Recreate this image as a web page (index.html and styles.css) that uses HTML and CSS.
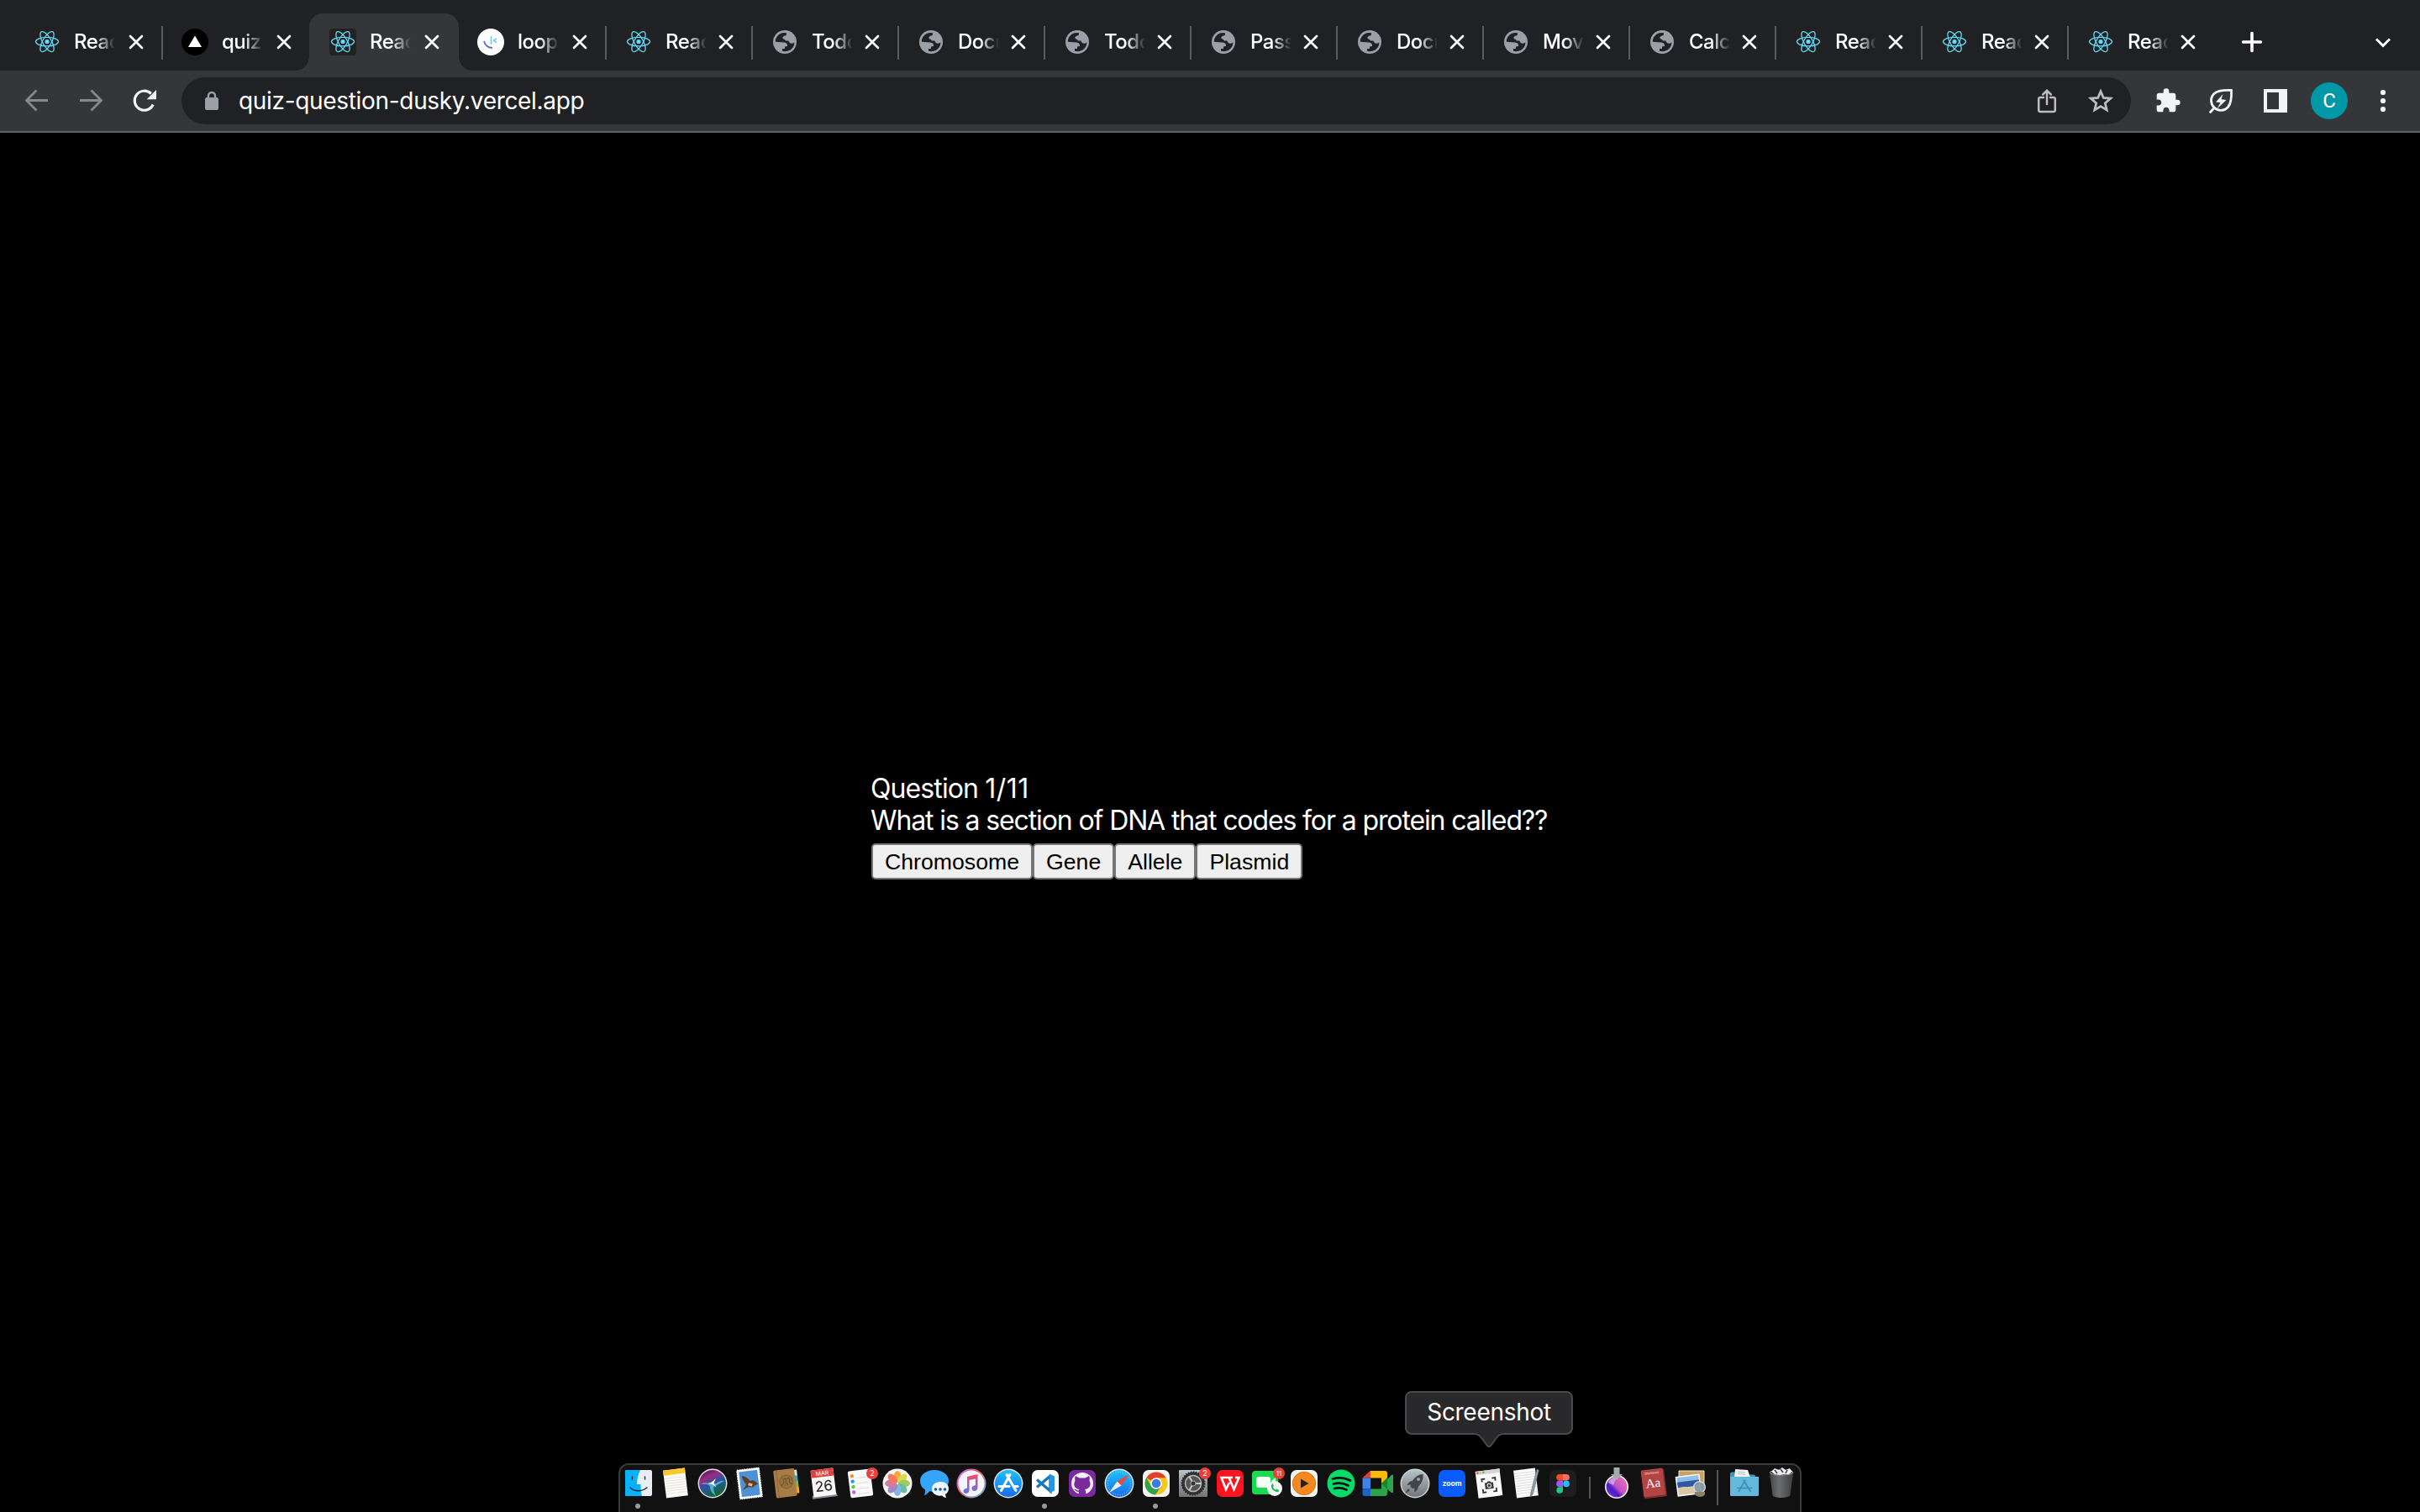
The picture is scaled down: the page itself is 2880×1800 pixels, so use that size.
FILE: index.html
```html
<!DOCTYPE html>
<html lang="en">
<head>
<meta charset="utf-8">
<title>Quiz</title>
<link rel="stylesheet" href="styles.css">
</head>
<body>
<svg class="defs" aria-hidden="true">
  <defs>
    <symbol id="react" viewBox="0 0 32 32">
      <rect width="32" height="32" rx="4" fill="#222"/>
      <g fill="none" stroke="#61dafb" stroke-width="1.3">
        <ellipse cx="16" cy="15.6" rx="13.5" ry="5.2"/>
        <ellipse cx="16" cy="15.6" rx="13.5" ry="5.2" transform="rotate(60 16 15.6)"/>
        <ellipse cx="16" cy="15.6" rx="13.5" ry="5.2" transform="rotate(120 16 15.6)"/>
      </g>
      <circle cx="16" cy="15.6" r="2.6" fill="#61dafb"/>
    </symbol>
    <symbol id="globe" viewBox="0 0 32 32">
      <circle cx="16" cy="16" r="14" fill="#9aa0a6"/>
      <path fill="#202124" d="M4.800 15.800C4.800 10 9 5.200 15 4.900l3 .4V7c-.6 2-4.800 1.600-4.600 4 .2 2 3.200 1.300 3.300 3.600h3.700c.6 3.400 4 4 7 1.900 0 6-5 10.800-11.300 10.700L13 26.800V24h3v-2.600l3-.4c.3-2.700-1-4.200-4-4.500z"/>
    </symbol>
    <symbol id="close" viewBox="0 0 20 20">
      <path d="M3 3l14 14M17 3L3 17" stroke="#fff" stroke-width="2.700" stroke-linecap="round"/>
    </symbol>
  </defs>
</svg>

<div class="tabs">
  <div class="tab wide"><svg class="fav"><use href="#react"/></svg><span class="name">Reac</span><svg class="x"><use href="#close"/></svg></div>
  <div class="tab wide sep"><svg class="fav" viewBox="0 0 32 32"><circle cx="16" cy="16" r="16" fill="#000"/><path d="M16 8.500L24 22H8z" fill="#fff"/></svg><span class="name">quiz-</span><svg class="x"><use href="#close"/></svg></div>
  <div class="tab wide active"><svg class="fav"><use href="#react"/></svg><span class="name">Reac</span><svg class="x"><use href="#close"/></svg></div>
  <div class="tab wide"><svg class="fav" viewBox="0 0 32 32"><circle cx="16" cy="16" r="16" fill="#fff"/><path d="M8 15c1 4.500 5 8 10 8" fill="none" stroke="#5f6fc4" stroke-width="1.800"/><path d="M16.500 9v10M23 12l-3.500 2.200L23 16.500" fill="none" stroke="#7cc4dc" stroke-width="1.500"/></svg><span class="name">loop</span><svg class="x"><use href="#close"/></svg></div>
  <div class="tab sep"><svg class="fav"><use href="#react"/></svg><span class="name">Reac</span><svg class="x"><use href="#close"/></svg></div>
  <div class="tab sep"><svg class="fav"><use href="#globe"/></svg><span class="name">Todo</span><svg class="x"><use href="#close"/></svg></div>
  <div class="tab sep"><svg class="fav"><use href="#globe"/></svg><span class="name">Docu</span><svg class="x"><use href="#close"/></svg></div>
  <div class="tab sep"><svg class="fav"><use href="#globe"/></svg><span class="name">Todo</span><svg class="x"><use href="#close"/></svg></div>
  <div class="tab sep"><svg class="fav"><use href="#globe"/></svg><span class="name">Pass</span><svg class="x"><use href="#close"/></svg></div>
  <div class="tab sep"><svg class="fav"><use href="#globe"/></svg><span class="name">Docu</span><svg class="x"><use href="#close"/></svg></div>
  <div class="tab sep"><svg class="fav"><use href="#globe"/></svg><span class="name">Mov</span><svg class="x"><use href="#close"/></svg></div>
  <div class="tab sep"><svg class="fav"><use href="#globe"/></svg><span class="name">Calc</span><svg class="x"><use href="#close"/></svg></div>
  <div class="tab sep"><svg class="fav"><use href="#react"/></svg><span class="name">Reac</span><svg class="x"><use href="#close"/></svg></div>
  <div class="tab sep"><svg class="fav"><use href="#react"/></svg><span class="name">Reac</span><svg class="x"><use href="#close"/></svg></div>
  <div class="tab sep"><svg class="fav"><use href="#react"/></svg><span class="name">Reac</span><svg class="x"><use href="#close"/></svg></div>
  <div class="newtab"><svg width="28" height="28" viewBox="0 0 28 28"><path d="M14 3.500v21M3.500 14h21" stroke="#fff" stroke-width="3.600" stroke-linecap="round"/></svg></div>
  <svg class="menu" width="24" height="24" viewBox="0 0 24 24"><path d="M4 7.500l8 8 8-8" fill="none" stroke="#fff" stroke-width="3"/></svg>
</div>

<div class="toolbar">
  <div class="nav">
    <svg width="32" height="32" viewBox="0 0 32 32"><path d="M29 15.500H4.500M15.500 3.500l-12 12 12 12" fill="none" stroke="#87888b" stroke-width="2.800"/></svg>
    <svg width="32" height="32" viewBox="0 0 32 32"><path d="M3 15.500h24.500M16.500 3.500l12 12-12 12" fill="none" stroke="#87888b" stroke-width="2.800"/></svg>
    <svg width="32" height="32" viewBox="0 0 32 32"><path d="M26.200 20.500A11.500 11.500 0 1 1 23.800 7.500" fill="none" stroke="#f1f3f4" stroke-width="3.200"/><path d="M30 3v11.200H18.700z" fill="#f1f3f4"/></svg>
  </div>
  <div class="omnibox">
    <svg class="lock" width="16" height="24" viewBox="0 0 16 24"><rect y="8" width="16" height="15" rx="2" fill="#9aa0a6"/><path d="M4 9V6a4 4 0 0 1 8 0v3" fill="none" stroke="#9aa0a6" stroke-width="2.400"/></svg>
    <span class="url">quiz-question-dusky.vercel.app</span>
    <svg class="share" width="32" height="32" viewBox="0 0 32 32"><path d="M12 12H8.200q-2 0-2 2v13q0 2 2 2h15.600q2 0 2-2V14q0-2-2-2H20" fill="none" stroke="#bdbdbd" stroke-width="2.500" stroke-linecap="round"/><path d="M16 20V4M11.200 8.500L16 3.700l4.800 4.800" fill="none" stroke="#bdbdbd" stroke-width="2.500" stroke-linecap="round"/></svg>
    <svg width="32" height="32" viewBox="0 0 32 32"><path d="M16 4.800l3.300 7.700 8.400.7-6.400 5.500 1.900 8.200-7.200-4.300-7.200 4.300 1.900-8.200-6.400-5.500 8.400-.7z" fill="none" stroke="#bdbdbd" stroke-width="2.800"/></svg>
  </div>
  <div class="actions">
    <svg width="32" height="32" viewBox="0 0 24 24"><path fill="#f1f3f4" d="M20.500 11H19V7c0-1.100-.9-2-2-2h-4V3.500a2.500 2.500 0 0 0-5 0V5H4c-1.100 0-1.990.9-1.990 2v3.800H3.500c1.490 0 2.700 1.210 2.700 2.700s-1.210 2.700-2.700 2.700H2V20c0 1.100.9 2 2 2h3.800v-1.500c0-1.490 1.210-2.700 2.700-2.700s2.700 1.210 2.700 2.700V22H17c1.100 0 2-.9 2-2v-4h1.500a2.500 2.500 0 0 0 0-5z"/></svg>
    <svg class="leaf" width="32" height="32" viewBox="0 0 32 32"><path d="M28.500 3.500c.4 8-.2 15.500-4 20-4.500 5-12 5-16.500.5S3.200 12 8 7.500c4-3.700 12-4.400 20.500-4zM8.500 24L3.500 29.500" fill="none" stroke="#f1f3f4" stroke-width="2.800" stroke-linecap="round"/><path d="M18.500 8l-8.500 9.500 5.500.5-4 7.500 11-10.500-6-.8z" fill="#f1f3f4"/></svg>
    <svg width="32" height="32" viewBox="0 0 32 32"><path d="M2 2h28v28H2zM6 6v20h14V6z" fill="#f1f3f4" fill-rule="evenodd"/></svg>
    <span class="avatar">C</span>
    <svg width="32" height="32" viewBox="0 0 32 32" fill="#f1f3f4"><circle cx="16" cy="6" r="3.100"/><circle cx="16" cy="16" r="3.100"/><circle cx="16" cy="26" r="3.100"/></svg>
  </div>
</div>

<main class="page">
  <div class="quiz">
    <div class="count">Question <span class="number">1/11</span></div>
    <div class="question">What is a section of DNA that codes for a protein called??</div>
    <div class="answers"><button>Chromosome</button><button>Gene</button><button>Allele</button><button>Plasmid</button></div>
  </div>
</main>

<div class="tooltip">Screenshot<svg width="36" height="18" viewBox="0 0 36 18"><path d="M0 0h36v2c-5 0-7 2-10 6l-6 8q-2 2-4 0l-6-8C7 4 5 2 0 2z" fill="#29282b"/><path d="M0 1c5 0 7 2 10 6l6 8q2 2 4 0l6-8c3-4 5-6 10-6" fill="none" stroke="#4a494c" stroke-width="2"/></svg></div>

<div class="dock">
  <svg class="app running" viewBox="0 0 44 52"><rect x="6" y="4" width="32" height="31" rx="2" fill="#e9eef6"/><path d="M8 4h16c-2.500 5-4 11-4 17h4.500c0 5 .5 10 1.500 14H8a2 2 0 0 1-2-2V6a2 2 0 0 1 2-2z" fill="#08b1fb"/><path d="M12 25c5 5 14 5 20 0M14.500 12v3M29.500 12v3" fill="none" stroke="#123" stroke-width="1.300" stroke-linecap="round"/><circle cx="21" cy="47" r="3" fill="#999"/></svg>
  <svg class="app" viewBox="0 0 44 52"><g transform="rotate(-7 22 20)"><rect x="9" y="3" width="26" height="33" fill="#fbfaf6"/><path d="M9 3h26v6H9z" fill="#fdc72c"/><path d="M10 13h24M10 16h24M10 19h24M10 22h24M10 25h24M10 28h24M10 31h24" stroke="#ddd" stroke-width=".7"/></g></svg>
  <svg class="app" viewBox="0 0 44 52"><defs><linearGradient id="siri" x2=".5" y2="1"><stop stop-color="#1a1540"/><stop offset=".35" stop-color="#a02880"/><stop offset=".6" stop-color="#2d54a5"/><stop offset="1" stop-color="#163"/></linearGradient></defs><circle cx="22" cy="20" r="16.700" fill="url(#siri)" stroke="#dedee6" stroke-width="1.500"/><path d="M7 21c7-4 10 0 15 0s8-5 14-4c-5 2-8 5-11 6s-2 6 1 12c-5-3-7-8-7-11s-6-4-12-3z" fill="#5ce3ee" opacity=".65"/><path d="M16 20l5-1.500 5-4.500-2.500 5.500 3 5-5-3.500z" fill="#fff"/></svg>
  <svg class="app" viewBox="0 0 44 52"><g transform="rotate(-7 22 20)"><rect x="9.500" y="3.500" width="25" height="33" fill="#4e91d5" stroke="#fff" stroke-width="3"/><rect x="8" y="2" width="28" height="36" fill="none" stroke="#111" stroke-width="1.200" stroke-dasharray="1.200 1.600"/><path d="M14 10c4 1 7 4 9 7 4-1 6 1 9 5l-4 1c-2 3-5 2-8 1l-7 3 5-6c-2-3-4-6-4-11z" fill="#5e3d25"/><path d="M21 19l5 2-2 3-4-2z" fill="#d6b591"/></g></svg>
  <svg class="app" viewBox="0 0 44 52"><g transform="rotate(-7 22 20)"><rect x="32" y="5" width="4" height="8" fill="#ddd"/><rect x="32" y="12" width="4" height="8" fill="#38a7c4"/><rect x="32" y="19" width="4" height="8" fill="#79bb4c"/><rect x="32" y="26" width="4" height="7" fill="#f3a529"/><rect x="8" y="3" width="25" height="33" rx="1.500" fill="#a77c45"/><path d="M11.500 3v33" stroke="#8c6535"/><circle cx="22" cy="18" r="8" fill="#96703d" stroke="#806032"/><path d="M16 23c0-3 3-3 3-5s-1-4 1-4 2 2 1.500 4c0 2 1.500 2 2 4m-1-7c3-3 5 0 3 3 0 2 3 2 3 4" fill="none" stroke="#735528" stroke-width="1.200"/></g></svg>
  <svg class="app" viewBox="0 0 44 52"><g transform="rotate(-7 22 20)"><path d="M7 33h29l1 4H7z" fill="#889"/><rect x="8.500" y="3" width="27" height="32" rx="1" fill="#f7f7f7"/><path d="M8.500 3h27v9h-27z" fill="#e3413d"/><text x="22" y="10.300" class="mar">MAR</text><text x="22" y="29" class="day">26</text></g></svg>
  <svg class="app" viewBox="0 0 44 52"><g transform="rotate(-7 22 20)"><rect x="8.500" y="4" width="27" height="32" rx="2" fill="#fafafa"/><circle cx="13" cy="10" r="2.200" fill="#fb9022"/><circle cx="13" cy="16.500" r="2.200" fill="#1695fb"/><circle cx="13" cy="23" r="2.200" fill="#55cf45"/><circle cx="13" cy="29.500" r="2.200" fill="#bd69de"/><path d="M18 13h14M18 19.500h14M18 26h14M18 32h14" stroke="#ddd"/></g><circle cx="36" cy="8" r="7" fill="#eb403a"/><text x="36" y="11" class="badge">2</text></svg>
  <svg class="app" viewBox="0 0 44 52"><circle cx="22" cy="20" r="17.500" fill="#f6f5f2"/><g opacity=".85"><ellipse cx="22" cy="12" rx="4.300" ry="7" fill="#f99a1d"/><ellipse cx="22" cy="12" rx="4.300" ry="7" fill="#d8d52f" transform="rotate(45 22 20)"/><ellipse cx="22" cy="12" rx="4.300" ry="7" fill="#8fc64b" transform="rotate(90 22 20)"/><ellipse cx="22" cy="12" rx="4.300" ry="7" fill="#55b395" transform="rotate(135 22 20)"/><ellipse cx="22" cy="12" rx="4.300" ry="7" fill="#6baee0" transform="rotate(180 22 20)"/><ellipse cx="22" cy="12" rx="4.300" ry="7" fill="#9075bd" transform="rotate(225 22 20)"/><ellipse cx="22" cy="12" rx="4.300" ry="7" fill="#ce6692" transform="rotate(270 22 20)"/><ellipse cx="22" cy="12" rx="4.300" ry="7" fill="#f3644a" transform="rotate(315 22 20)"/></g></svg>
  <svg class="app" viewBox="0 0 44 52"><path d="M22 4c9.500 0 17 5.500 17 13s-7 13-17 13c-2 0-4-.2-5.500-.7C14 32 12 34 9.500 34c1.500-2 2-4 1.500-6.500-4-2.300-6-6-6-10.500C5 9.500 12.500 4 22 4z" fill="#35a5fb"/><path d="M29 18c6 0 10 3.500 10 8 0 3-1.500 5.500-4 7l1 4c-2 0-3.500-1-5-2.500-7 1-12-3-12-8s4.500-8.500 10-8.500z" fill="#eef5fc"/><circle cx="23.500" cy="27" r="1.800" fill="#125a9c"/><circle cx="29" cy="27" r="1.800" fill="#125a9c"/><circle cx="34.500" cy="27" r="1.800" fill="#125a9c"/></svg>
  <svg class="app" viewBox="0 0 44 52"><defs><linearGradient id="tunes" x2="1" y2="1"><stop offset=".1" stop-color="#c86bf0"/><stop offset=".4" stop-color="#fa5262"/><stop offset="1" stop-color="#4bc7f5"/></linearGradient><linearGradient id="note" x2="0" y2="1"><stop stop-color="#fb4763"/><stop offset="1" stop-color="#5978f4"/></linearGradient></defs><circle cx="22" cy="20" r="16.500" fill="#f5f3fa" stroke="url(#tunes)" stroke-width="2"/><path d="M17 12l12.500-3v16c0 5-7 5-7 1 0-3 3-3.500 4.500-4v-7.500L19.500 16v12c0 5-7 5-7 1.500 0-3 3-3.500 4.500-4z" fill="url(#note)"/></svg>
  <svg class="app" viewBox="0 0 44 52"><defs><linearGradient id="blue" x2="0" y2="1"><stop stop-color="#1fc2fb"/><stop offset="1" stop-color="#176aed"/></linearGradient></defs><circle cx="22" cy="20" r="16.700" fill="url(#blue)" stroke="#dde3ea" stroke-width="1.500"/><path d="M20 9.500l11 19M24 9.500l-10.500 19M11 23.500h12M28 23.500h5" stroke="#fff" stroke-width="3" stroke-linecap="round"/></svg>
  <svg class="app running" viewBox="0 0 44 52"><rect x="6" y="4" width="32" height="32" rx="7" fill="#fff"/><path d="M28 11v18L12 15.500M28 11L12 24.500" fill="none" stroke="#1b77bb" stroke-width="3.400"/><path d="M27 8.500l6 3v17l-6 3z" fill="#2496e4"/><circle cx="21" cy="47" r="3" fill="#999"/></svg>
  <svg class="app" viewBox="0 0 44 52"><rect x="6" y="4" width="32" height="32" rx="7" fill="#7b2a9d"/><circle cx="22" cy="20" r="13" fill="#f4eff6"/><path d="M14 11l4.500 2.500h7L30 11c1 2 1 4 .5 5.500 3 6-.5 10-5.500 10.500 1 1 1.500 3 1.200 6h-8.400v-3c-3 0-4-2-5.500-3 2.500-.5 3.500 2 5.500 1.500 0-.8.500-1.200 1.200-1.500-5.500-.5-8.500-4.500-5.500-10.500C13 15 13 13 14 11z" fill="#7b2a9d"/></svg>
  <svg class="app" viewBox="0 0 44 52"><circle cx="22" cy="20" r="16.700" fill="url(#blue)" stroke="#dde3ea" stroke-width="1.500"/><circle cx="22" cy="20" r="13.500" fill="none" stroke="#a8dcf8" stroke-dasharray="1 1.800"/><path d="M34 9L24.500 22.500 19.500 17.500z" fill="#f2463d"/><path d="M10 31l9.500-13.500 5 5z" fill="#eef2f5"/></svg>
  <svg class="app running" viewBox="0 0 44 52"><rect x="6" y="4" width="32" height="32" rx="7" fill="#f6f6f6"/><circle cx="22" cy="20" r="13.500" fill="#fbc51b"/><path d="M22 20L10.300 13.200A13.500 13.500 0 0 1 33.700 13.200H22z" fill="#e3402f"/><path d="M10.300 13.200a13.500 13.500 0 0 0 10.500 20.200L27.800 23.400 22 20l-5.800 3.400z" fill="#2fa24d"/><circle cx="22" cy="20" r="6.800" fill="#fff"/><circle cx="22" cy="20" r="5.300" fill="#3b79e8"/><circle cx="21" cy="47" r="3" fill="#999"/></svg>
  <svg class="app" viewBox="0 0 44 52"><defs><linearGradient id="metal" x2="0" y2="1"><stop stop-color="#b7c3ca"/><stop offset="1" stop-color="#737576"/></linearGradient></defs><rect x="5" y="4" width="34" height="32" rx="1" fill="url(#metal)"/><circle cx="22" cy="20" r="13.500" fill="#333" stroke="#222" stroke-width="2" stroke-dasharray="1.500 1.500"/><circle cx="22" cy="20" r="9.500" fill="#555" stroke="#bbb" stroke-width="1.500"/><path d="M22 20h9.500M22 20l-4.800-8.500M22 20l-4.800 8.500" stroke="#c9c9c9" stroke-width="2"/><circle cx="22" cy="20" r="3" fill="#333" stroke="#aaa"/><circle cx="36" cy="8" r="7" fill="#eb403a"/><text x="36" y="11" class="badge">2</text></svg>
  <svg class="app" viewBox="0 0 44 52"><rect x="6" y="4" width="32" height="32" rx="7" fill="#fa1420"/><path d="M25 13H11.500L17 27l4-8M20.500 13L26.500 27 32.500 13H28" fill="none" stroke="#fff" stroke-width="2.600"/></svg>
  <svg class="app" viewBox="0 0 44 52"><rect x="4" y="5" width="31" height="28" rx="4" fill="#18dc50"/><rect x="9" y="12" width="17" height="13" rx="3" fill="#f5fff7"/><path d="M27 17l5-4v11l-5-4z" fill="#f5fff7"/><circle cx="31" cy="26" r="9" fill="#f1f5f3"/><path d="M27 22c-1 4 4 9 8.500 8l.5-2-2.500-1.500-1.500 1c-1.500-.5-2.500-2-3-3l1-1.500L28.500 20z" fill="#1bbd4e"/><circle cx="36" cy="8" r="7" fill="#eb403a"/><text x="36" y="11" class="badge small">11</text></svg>
  <svg class="app" viewBox="0 0 44 52"><rect x="6" y="4" width="32" height="32" rx="7" fill="#f4f4f4"/><circle cx="22" cy="20" r="13.700" fill="#f4891f" stroke="#d8741b"/><path d="M18 14.500l9.500 5.500-9.500 5.500z" fill="#2b2018"/></svg>
  <svg class="app" viewBox="0 0 44 52"><circle cx="22" cy="20" r="16.500" fill="#08dc68"/><path d="M12 14.500c7-2 14-1.500 21 2M13 20.500c6-1.500 12-1 17.500 2M14 26c5-1.200 10-.7 14.500 1.500" fill="none" stroke="#111" stroke-width="2.800" stroke-linecap="round"/></svg>
  <svg class="app" viewBox="0 0 44 52"><path d="M3.500 13.500L13 4.500v9z" fill="#e64234"/><path d="M13 5h17c2 0 3 1 3 3v10l-7 3v-7.500H13z" fill="#fbbb0c"/><path d="M3.500 13.500H13v13H3.500z" fill="#3f82ea"/><path d="M3.500 26.500H13V35H6c-2 0-2.500-1-2.500-2.500z" fill="#1c62cb"/><path d="M13 26.500h13V20l7-5 5-5c1.500-1 2-.5 2 1v19c0 1.500-1 1.500-2 1l-5-4v5c0 2-1 3-3 3H13z" fill="#2ba54b"/><path d="M26 20l7-7v14z" fill="#15823a"/></svg>
  <svg class="app" viewBox="0 0 44 52"><circle cx="22" cy="20" r="16.700" fill="url(#metal)" stroke="#ccd2d5" stroke-width="1.500"/><path d="M31.500 9c-6 0-10 4-12.500 8-3 0-5 2-6.500 5l4.500-.5c-.5 1-.7 1.700-.5 2.500l2.500 2c1 0 1.500 0 2.500-.5l-.5 5c3-1.500 4.500-3.500 5-7C30 20 32 15 31.500 9zM14 26l-4 6 6-3.500z" fill="#414549"/><circle cx="26" cy="15" r="2" fill="#9aa3a7"/></svg>
  <svg class="app" viewBox="0 0 44 52"><rect x="6" y="4" width="32" height="32" rx="7" fill="#0b5cff"/><text x="22" y="22.500" class="zoom">zoom</text></svg>
  <svg class="app" viewBox="0 0 44 52"><g transform="rotate(-7 22 20)"><rect x="7.500" y="4" width="29" height="32" fill="#fafafa"/><path d="M7.500 4h29v4.500h-29z" fill="#d5d5d5"/><circle cx="10" cy="6.200" r="1.200" fill="#ef4b45"/><circle cx="13.500" cy="6.200" r="1.200" fill="#f6bd3c"/><circle cx="17" cy="6.200" r="1.200" fill="#43bd45"/><path d="M14 17.500V14h4M26 14h4v3.500M30 26v4h-4M18 30h-4v-4" fill="none" stroke="#333" stroke-width="1.800"/><path d="M17 19h2.500l1-1.500h3l1 1.500H27v7.500H17z" fill="#3a3a3a"/><circle cx="22" cy="22.500" r="2.200" fill="#3a3a3a" stroke="#fff"/></g></svg>
  <svg class="app" viewBox="0 0 44 52"><g transform="rotate(-7 22 20)"><rect x="9" y="3" width="26" height="33" fill="#fafafa"/><path d="M10 7h24M10 10h24M10 13h24M10 16h24M10 19h24M10 22h24M10 25h24M10 28h24M10 31h24" stroke="#d9d9d9" stroke-width=".8"/></g><path d="M35 3l2.500 1-7.500 29-2.500 3 .2-4z" fill="#8fa3b5" stroke="#49515a" stroke-width=".6"/></svg>
  <svg class="app" viewBox="0 0 44 52"><rect x="6" y="4" width="32" height="32" rx="7" fill="#1e1d1f"/><path d="M22 9h-4a3.800 3.800 0 0 0 0 7.600h4z" fill="#f34d20"/><path d="M22 9h4a3.800 3.800 0 0 1 0 7.600h-4z" fill="#fc6f60"/><path d="M22 16.600h-4a3.800 3.800 0 0 0 0 7.600h4z" fill="#9f59fa"/><circle cx="26" cy="20.400" r="3.800" fill="#25b9fb"/><path d="M22 24.200h-4a3.800 3.800 0 1 0 4 3.800z" fill="#17cc81"/></svg>
  <span class="divider short"></span>
  <svg class="app" viewBox="0 0 44 52"><defs><linearGradient id="monterey" x1="1" x2="0" y2="1"><stop stop-color="#ff73b4"/><stop offset=".5" stop-color="#c453c5"/><stop offset=".65" stop-color="#4a1cc2"/><stop offset="1" stop-color="#8d3be6"/></linearGradient></defs><circle cx="22" cy="24" r="13.200" fill="url(#monterey)" stroke="#eee" stroke-width="1.600"/><path d="M12 19c3-5 7-7 10-7l-4 10z" fill="#c7b0e8" opacity=".8"/><path d="M18.500 1h7v8h3.500l-7 7-7-7h3.500z" fill="#a5abad"/></svg>
  <svg class="app" viewBox="0 0 44 52"><g transform="rotate(-7 22 20)"><rect x="9" y="4" width="27" height="33" rx="1.500" fill="#7e2c2b"/><rect x="8.500" y="3" width="26" height="32" rx="1.500" fill="#b34444"/><text x="21.500" y="8.500" class="dict">Dictionary</text><text x="21.500" y="24.500" class="aa">Aa</text></g></svg>
  <svg class="app" viewBox="0 0 44 52"><path d="M8 5h30v24H8z" fill="#c9a263" stroke="#f0e6cf"/><g transform="rotate(-7 20 22)"><path d="M5 10h29v24H5z" fill="#fff"/><path d="M6.500 11.500h26v9h-26z" fill="#8cc0e8"/><path d="M6.500 17h26v7h-26z" fill="#3158a0"/><path d="M6.500 24c8-3 15 3 26-2v10.500h-26z" fill="#d9c7a8"/></g><circle cx="32.500" cy="24.500" r="6.800" fill="#8299a8" opacity=".9" stroke="#d8d8d8" stroke-width="1.600"/><path d="M27 30h12v3c-2 4-9 4-12 0z" fill="#8b8067"/></svg>
  <span class="divider tall"></span>
  <svg class="app" viewBox="0 0 44 52"><path d="M5 8.500q0-2 2-2h9l2 3h15q2 0 2 2v10H5z" fill="#3d94b8"/><path d="M11 3l15 1 3 9H10z" fill="#f4f4f4"/><path d="M14 6l9 1M14 8.500l9 1" stroke="#bbb"/><path d="M5 12h34v21.500q0 1.500-1.500 1.500h-31Q5 35 5 33.500z" fill="#62b9dc"/><path d="M21 16l8.500 14M23 16l-8 14M13 25.500h18" stroke="#3c8fb3" stroke-width="1.600"/></svg>
  <svg class="app" viewBox="0 0 44 52"><defs><linearGradient id="bin"><stop stop-color="#444"/><stop offset=".4" stop-color="#6c6f71"/><stop offset="1" stop-color="#3b3c3d"/></linearGradient></defs><path d="M8 7h28l-3.500 27c-1 4-20 4-21 0z" fill="url(#bin)"/><ellipse cx="22" cy="7" rx="14" ry="3" fill="#2b2b2b" stroke="#999"/><path d="M10 6l4-4 5 2 4-3 4 3 5-2 3 4-4 3-6 0-5 1-6-1z" fill="#eee"/><path d="M14 4l3 4M21 3l3 4M29 4l-2 4" stroke="#445" stroke-width="1.600"/></svg>
</div>
</body>
</html>
```
FILE: styles.css
```css
* { box-sizing: border-box; }
body {
  margin: 0;
  width: 2880px;
  height: 1800px;
  display: flex;
  flex-direction: column;
  overflow: hidden;
  position: relative;
  background: #000;
  color: #fff;
  font-family: Inter, "Liberation Sans", sans-serif;
}
svg { display: block; flex: none; }
.defs { position: absolute; width: 0; height: 0; }

.tabs {
  height: 84px;
  padding: 16px 32px 0 16px;
  display: flex;
  flex: none;
  background: #202124;
}
.tab {
  position: relative;
  width: 174px;
  height: 68px;
  padding-left: 24px;
  display: flex;
  align-items: center;
  flex: none;
}
.tab.wide { width: 176px; }
.tab.sep::before {
  content: "";
  position: absolute;
  left: 0;
  top: 15px;
  width: 2px;
  height: 40px;
  background: #5b5c60;
}
.tab.wide.active { width: 178px; margin-right: -2px; background: #35363a; border-radius: 16px 16px 0 0; }
.tab.active::before,
.tab.active::after {
  content: "";
  position: absolute;
  bottom: 0;
  width: 16px;
  height: 16px;
}
.tab.active::before { left: -16px; background: radial-gradient(circle at 0 0, transparent 15.5px, #35363a 16px); }
.tab.active::after { right: -16px; background: radial-gradient(circle at 100% 0, transparent 15.5px, #35363a 16px); }
.fav { width: 32px; height: 32px; }
.name {
  width: 48px;
  margin-left: 16px;
  white-space: nowrap;
  font-size: 24px;
  line-height: 32px;
  font-weight: 500;
  letter-spacing: -.5px;
  -webkit-mask-image: linear-gradient(90deg, #000 26px, transparent 49px);
  mask-image: linear-gradient(90deg, #000 26px, transparent 49px);
}
.wide .name { width: 50px; }
.x { width: 20px; height: 20px; margin-left: 14px; }
.newtab { margin-left: 32px; display: flex; align-items: center; }
.menu { margin: 23px 0 0 auto; }

.toolbar {
  height: 74px;
  padding: 0 28px 0 28px;
  display: flex;
  align-items: center;
  flex: none;
  background: #35363a;
  border-bottom: 2px solid #5f6063;
}
.nav { display: flex; gap: 32px; width: 188px; }
.omnibox {
  width: 2320px;
  height: 56px;
  padding: 0 20px 0 28px;
  display: flex;
  align-items: center;
  border-radius: 28px;
  background: #202124;
}
.url { margin-left: 24px; font-size: 28px; line-height: 36px; letter-spacing: -.32px; white-space: nowrap; }
.share { margin: 0 32px 0 auto; }
.actions { display: flex; align-items: center; gap: 32px; margin-left: 28px; }
.leaf { margin: 0 1px 0 -1px; }
.avatar {
  width: 44px;
  height: 44px;
  margin: 0 -6px;
  border-radius: 50%;
  background: #0097a7;
  font: 24px/44px Roboto, sans-serif;
  text-align: center;
}

.page { flex: 1; display: flex; justify-content: center; align-items: center; padding-top: 9px; }
.quiz { width: 808px; font-size: 32px; line-height: 38px; white-space: nowrap; }
.count { letter-spacing: -.9px; }
.number { letter-spacing: .5px; }
.question { letter-spacing: -1.12px; }
.answers { display: flex; margin: 8px 0 0 1px; }
button {
  height: 43px;
  padding: 0 14px;
  border: 2px solid #767676;
  border-radius: 5px;
  background: #efefef;
  color: #000;
  font: 26.667px/30px "Liberation Sans", Arial, sans-serif;
}

.tooltip {
  position: absolute;
  left: 1672px;
  top: 1656px;
  width: 200px;
  height: 52px;
  border: 2px solid #4a494c;
  border-radius: 8px;
  background: #29282b;
  font-size: 28px;
  line-height: 46px;
  letter-spacing: -.3px;
  text-align: center;
}
.tooltip svg { position: absolute; left: 80px; top: 48px; }

.dock {
  position: absolute;
  left: 736px;
  top: 1742px;
  width: 1408px;
  height: 62px;
  padding-top: 2px;
  display: flex;
  border: 2px solid #3a3a3a;
  border-radius: 12px 12px 0 0;
  background: #111;
}
.app { width: 44px; height: 52px; overflow: visible; }
.divider { width: 20px; display: flex; justify-content: center; }
.divider::before { content: ""; width: 2px; background: #555; }
.short::before { height: 26px; margin-top: 12px; }
.tall::before { height: 42px; margin-top: 4px; }
.app text { font-family: Inter, sans-serif; text-anchor: middle; fill: #fff; }
.app .mar { font-size: 7px; }
.app .day { font-size: 17px; fill: #222; }
.app .badge { font-size: 9px; }
.app .badge.small { font-size: 8px; }
.app .zoom { font-size: 8.500px; font-weight: 700; }
.app .dict { font: 4px "Liberation Serif", serif; }
.app .aa { font: 15px "Liberation Serif", serif; }
```
